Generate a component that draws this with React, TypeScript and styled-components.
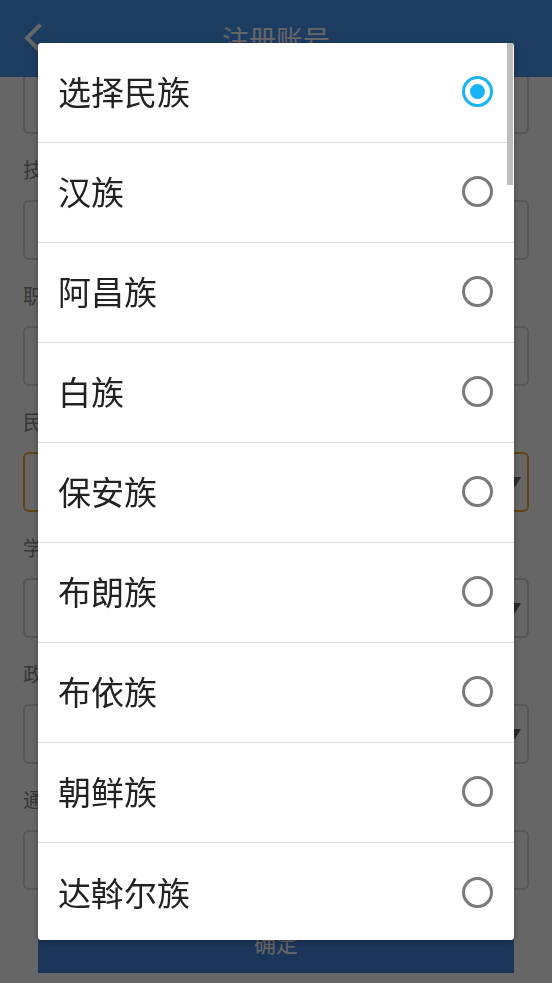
import styled, { createGlobalStyle } from "styled-components";

const GlobalStyle = createGlobalStyle`
  html, body {
    margin: 0;
    padding: 0;
    background: #ffffff;
    font-family: "Noto Sans CJK SC", "Noto Sans", sans-serif;
  }
  * {
    box-sizing: border-box;
  }
`;

const nations = [
  "选择民族",
  "汉族",
  "阿昌族",
  "白族",
  "保安族",
  "布朗族",
  "布依族",
  "朝鲜族",
  "达斡尔族",
];

const fields = [
  { label: "姓名", select: false },
  { label: "技术职称", select: false },
  { label: "职务", select: false },
  { label: "民族", select: true, active: true },
  { label: "学历", select: true },
  { label: "政治面貌", select: true },
  { label: "通讯地址", select: false },
];

const App = () => {
  const selected = 0;

  return (
    <>
      <GlobalStyle />
      <Page>
        <Header>
          <BackButton>
            <svg width="22" height="30" viewBox="0 0 22 30">
              <path
                d="M17 3 L5 15 L17 27"
                fill="none"
                stroke="#ffffff"
                strokeWidth="4"
                strokeLinecap="square"
              />
            </svg>
          </BackButton>
          <Title>注册账号</Title>
        </Header>

        <Form>
          {fields.map((f) => (
            <Field key={f.label}>
              <Label>{f.label}</Label>
              <Input $active={f.active}>
                {f.select && <Caret />}
              </Input>
            </Field>
          ))}
          <Submit>确定</Submit>
        </Form>
      </Page>

      <Overlay>
        <Dialog>
          <List>
            {nations.map((name, i) => (
              <Option key={name}>
                <OptionText>{name}</OptionText>
                <Radio $checked={i === selected} />
              </Option>
            ))}
          </List>
          <Thumb />
        </Dialog>
      </Overlay>
    </>
  );
};

export default App;

const Page = styled.div`
  width: 552px;
  height: 983px;
  overflow: hidden;
  background: #ffffff;
`;

const Header = styled.div`
  position: fixed;
  top: 0;
  left: 0;
  width: 552px;
  height: 77px;
  background: #4896f6;
  display: flex;
  align-items: center;
  justify-content: center;
  z-index: 2;
`;

const BackButton = styled.div`
  position: absolute;
  left: 22px;
  top: 23px;
  display: flex;
`;

const Title = styled.div`
  color: #ffffff;
  font-size: 27px;
  margin-top: -1px;
`;

const Form = styled.div`
  padding: 8px 23px 0;
  display: flex;
  flex-direction: column;
`;

const Field = styled.div`
  padding-top: 24px;
  display: flex;
  flex-direction: column;
`;

const Label = styled.div`
  font-size: 20px;
  line-height: 24px;
  height: 24px;
  color: #8a8a8a;
  margin-bottom: 18px;
`;

const Input = styled.div<{ $active?: boolean }>`
  height: 60px;
  border: 2px solid ${(p) => (p.$active ? "#f5a623" : "#d6d6d6")};
  border-radius: 6px;
  display: flex;
  align-items: center;
  justify-content: flex-end;
  padding-right: 6px;
`;

const Caret = styled.div`
  width: 0;
  height: 0;
  border-left: 6px solid transparent;
  border-right: 6px solid transparent;
  border-top: 10px solid #666666;
`;

const Submit = styled.div`
  margin: 21px 15px 0;
  height: 62px;
  background: #4588e2;
  color: #ffffff;
  font-size: 22px;
  display: flex;
  align-items: center;
  justify-content: center;
`;

const Overlay = styled.div`
  position: fixed;
  inset: 0;
  background: rgba(0, 0, 0, 0.6);
  padding: 43px 0 0 38px;
  z-index: 10;
`;

const Dialog = styled.div`
  position: relative;
  width: 476px;
  height: 897px;
  background: #ffffff;
  border-radius: 3px;
  overflow: hidden;
  box-shadow: 0 2px 6px rgba(0, 0, 0, 0.3);
`;

const List = styled.div`
  display: flex;
  flex-direction: column;
`;

const Option = styled.div`
  height: 100px;
  flex-shrink: 0;
  display: flex;
  align-items: center;
  justify-content: space-between;
  padding: 0 21px 0 20px;
  border-bottom: 1px solid #e0e0e0;
  &:last-child {
    border-bottom: none;
  }
`;

const OptionText = styled.div`
  font-size: 33px;
  color: #222222;
  margin-top: -3px;
`;

const Radio = styled.div<{ $checked?: boolean }>`
  width: 31px;
  height: 31px;
  border-radius: 50%;
  border: 3px solid ${(p) => (p.$checked ? "#17b3f5" : "#7a7a7a")};
  display: flex;
  align-items: center;
  justify-content: center;
  margin-top: -2px;

  &::after {
    content: "";
    display: ${(p) => (p.$checked ? "block" : "none")};
    width: 15px;
    height: 15px;
    border-radius: 50%;
    background: #17b3f5;
  }
`;

const Thumb = styled.div`
  position: absolute;
  top: 0;
  right: 1px;
  width: 6px;
  height: 142px;
  background: #bdbdbd;
`;
